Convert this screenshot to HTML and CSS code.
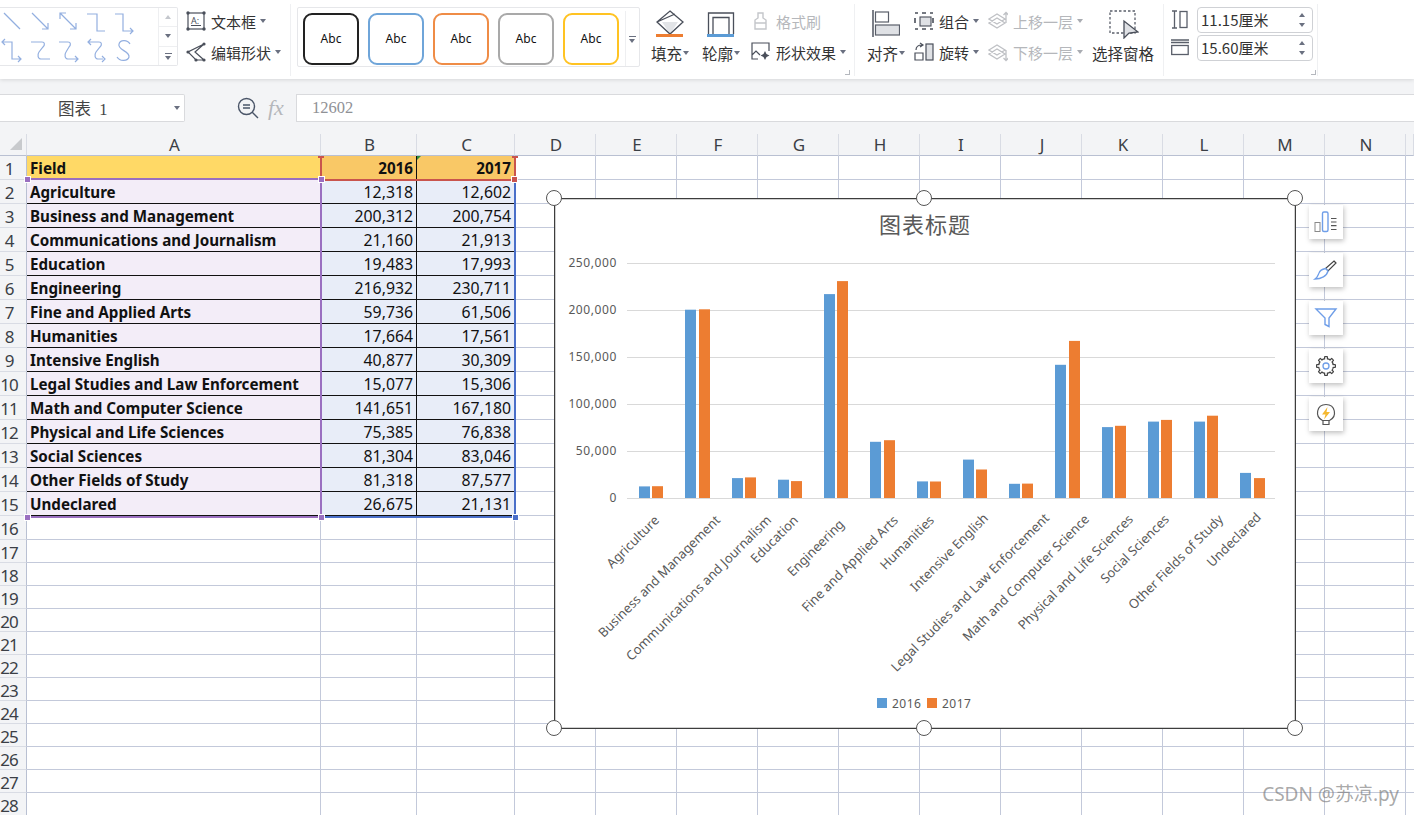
FILE: index.html
```html
<!DOCTYPE html>
<html lang="zh-CN">

<head>
    <meta charset="UTF-8">
    <meta name="viewport" content="width=device-width, initial-scale=1.0">
    <title>图表 1</title>
    <link rel="stylesheet" href="styles.css">
</head>

<body>
    <!-- Ribbon -->
    <div class="ribbon">
        <div class="shape-gallery">
            <svg class="connectors" width="156" height="57" viewBox="0 0 156 57">
                <g fill="none" stroke="#93afe0" stroke-width="1.2">
                    <path d="M4 5 20 21" />
                    <path d="M32 5 48 21M48 15v6h-6" />
                    <path d="M60 5 76 21M60 11V5h6M76 15v6h-6" />
                    <path d="M87 6h10v17h8" />
                    <path d="M115 6h8v17h10M130 20l3 3-3 3" />
                    <path d="M3 34h9v17h9M5 31l-3 3 3 3M18 48l3 3-3 3" />
                    <path d="M31 34h11c3 0 3 3 1 5l-4 5c-2 3-1 7 2 7h9" />
                    <path d="M59 34h9c3 0 3 3 1 5l-3 5c-2 3-1 7 2 7h10M75 48l3 3-3 3" />
                    <path d="M88 34h11c3 0 3 3 1 5l-4 5c-2 3-1 7 2 7h5M91 31l-3 3 3 3M102 48l3 3-3 3" />
                    <path d="M130 36c-3-5-10-4-11 0-2 6 11 7 10 13-1 4-9 5-12 0" />
                </g>
            </svg>
            <div class="gallery-scroll">
                <span class="scroll-btn"><i class="tri-up tri-light"></i></span>
                <span class="scroll-btn"><i class="tri-down"></i></span>
                <span class="scroll-btn"><i class="more-icon"></i></span>
            </div>
        </div>

        <div class="cmd-col textbox-col">
            <div class="cmd">
                <svg width="20" height="20" viewBox="0 0 20 20">
                    <rect x="2" y="2" width="16" height="16" fill="none" stroke="#4a4f5a" stroke-width="1.2" />
                    <g fill="#4a4f5a">
                        <circle cx="2" cy="2" r="1.7" />
                        <circle cx="18" cy="2" r="1.7" />
                        <circle cx="2" cy="18" r="1.7" />
                        <circle cx="18" cy="18" r="1.7" />
                        <rect x="5" y="14" width="10" height="1" />
                    </g>
                    <text x="5" y="12.5" class="icon-letter">A:</text>
                </svg>
                <span>文本框</span><i class="caret"></i>
            </div>
            <div class="cmd">
                <svg width="20" height="20" viewBox="0 0 20 20">
                    <path d="M18 2 2 10l8 8h8M18 2 9 10l9 8" fill="none" stroke="#4a4f5a" stroke-width="1.2" />
                    <g fill="#4a4f5a">
                        <circle cx="18" cy="2" r="1.6" />
                        <circle cx="2" cy="10" r="1.6" />
                        <circle cx="10" cy="18" r="1.6" />
                        <circle cx="18" cy="18" r="1.6" />
                    </g>
                </svg>
                <span>编辑形状</span><i class="caret"></i>
            </div>
        </div>

        <div class="sep sep-a"></div>

        <div class="style-gallery">
            <span class="abc abc-black">Abc</span>
            <span class="abc abc-blue">Abc</span>
            <span class="abc abc-orange">Abc</span>
            <span class="abc abc-grey">Abc</span>
            <span class="abc abc-yellow">Abc</span>
            <span class="style-more"><i class="more-icon"></i></span>
        </div>

        <div class="big-btn fill-btn">
            <svg width="28" height="28" viewBox="0 0 28 28">
                <path d="M14 12h-8l8 12 8-12z" fill="#e2e4e7" />
                <path d="M14 1 27 12 14 24 1 12zM1 12 19 4" fill="none" stroke="#4a4f5a" stroke-width="1.3" />
                <rect x="0" y="24" width="27" height="3" fill="#ed7d31" />
            </svg>
            <span class="big-label">填充<i class="caret"></i></span>
        </div>
        <div class="big-btn outline-btn">
            <svg width="28" height="28" viewBox="0 0 28 28">
                <path d="M1.500 24V3h25v21M6 24V7.500h16V24" fill="none" stroke="#4a4f5a" stroke-width="1.3" />
                <rect x="0" y="24" width="27" height="3" fill="#5b9bd5" />
            </svg>
            <span class="big-label">轮廓<i class="caret"></i></span>
        </div>

        <div class="cmd-col effects-col">
            <div class="cmd cmd-off">
                <svg width="20" height="20" viewBox="0 0 20 20">
                    <path d="M7 2h5v5l3 2v9H4V9l3-2zM4 12h11" fill="none" stroke="#c4c6ca" stroke-width="1.4" />
                </svg>
                <span>格式刷</span>
            </div>
            <div class="cmd">
                <svg width="20" height="20" viewBox="0 0 20 20">
                    <path d="M7 17H1V1h17v8M1 13l4-4 4 4" fill="none" stroke="#4a4f5a" stroke-width="1.2" />
                    <path d="M14 9l1.500 3 3 1.500-3 1.500-1.500 3-1.500-3-3-1.500 3-1.500z" fill="#4a4f5a" />
                </svg>
                <span>形状效果</span><i class="caret"></i>
            </div>
            <i class="corner-mark"></i>
        </div>

        <div class="sep sep-b"></div>

        <div class="big-btn align-btn">
            <svg width="28" height="28" viewBox="0 0 28 28">
                <path d="M1 0v27" stroke="#5a5f6a" stroke-width="1.600" />
                <rect x="3.500" y="2" width="13" height="10" fill="#fff" stroke="#5a5f6a" stroke-width="1.200" />
                <rect x="3.500" y="15" width="24" height="10" fill="#dfe1e5" stroke="#5a5f6a" stroke-width="1.200" />
            </svg>
            <span class="big-label">对齐<i class="caret"></i></span>
        </div>

        <div class="cmd-col group-col">
            <div class="cmd">
                <svg width="20" height="20" viewBox="0 0 20 20">
                    <path d="M1 2h3M8 2h4M16 2h3M1 7v5M19 7v5M1 18h3M8 18h4M16 18h3" stroke="#4a4f5a" stroke-width="1.600" fill="none" />
                    <rect x="6" y="6" width="11" height="9" fill="#dfe1e5" stroke="#4a4f5a" stroke-width="1.100" />
                </svg>
                <span>组合</span><i class="caret"></i>
            </div>
            <div class="cmd">
                <svg width="20" height="20" viewBox="0 0 20 20">
                    <rect x="12" y="2" width="7" height="16" fill="#dfe1e5" stroke="#4a4f5a" stroke-width="1.200" />
                    <path d="M1 18v-7h8v7zM2 8c0-3 2-5 6-5M6 1l3 2-3 2" fill="none" stroke="#4a4f5a" stroke-width="1.200" />
                </svg>
                <span>旋转</span><i class="caret"></i>
            </div>
        </div>

        <div class="cmd-col layer-col">
            <div class="cmd cmd-off">
                <svg width="20" height="20" viewBox="0 0 20 20">
                    <path d="M1 12l8-5 8 5-8 5zM1 8l8-5 8 5-8 5zM18 12V2M15.500 4 18 1.500 20.500 4" fill="#fff" stroke="#bfc1c5" stroke-width="1.300" />
                </svg>
                <span>上移一层</span><i class="caret caret-off"></i>
            </div>
            <div class="cmd cmd-off">
                <svg width="20" height="20" viewBox="0 0 20 20">
                    <path d="M1 12l8-5 8 5-8 5zM1 8l8-5 8 5-8 5zM18 8v10M15.500 16 18 18.500 20.500 16" fill="#fff" stroke="#bfc1c5" stroke-width="1.300" />
                </svg>
                <span>下移一层</span><i class="caret caret-off"></i>
            </div>
        </div>

        <div class="big-btn select-btn">
            <svg width="32" height="30" viewBox="0 0 32 30">
                <rect x="3" y="2" width="25" height="22" fill="none" stroke="#5a5f6a" stroke-width="1.300" stroke-dasharray="2.500 2" />
                <path d="M17 12v17l5-5 9-1z" fill="#dfe1e5" stroke="#4a4f5a" stroke-width="1.300" />
            </svg>
            <span class="big-label">选择窗格</span>
        </div>

        <div class="sep sep-c"></div>

        <div class="size-group">
            <div class="size-row">
                <svg width="18" height="20" viewBox="0 0 18 20">
                    <path d="M1 1h5M1 18h5M3.500 1v17" stroke="#5a5f6a" stroke-width="1.300" fill="none" />
                    <rect x="9" y="1.500" width="7" height="16" fill="none" stroke="#5a5f6a" stroke-width="1.300" />
                </svg>
                <div class="size-input">11.15厘米<span class="spin"><i class="tri-up"></i><i class="tri-down"></i></span></div>
            </div>
            <div class="size-row">
                <svg width="18" height="20" viewBox="0 0 18 20">
                    <path d="M0 2h18M0 4.500 18 4.500" stroke="#5a5f6a" stroke-width="1.300" fill="none" />
                    <rect x="0.700" y="7.500" width="16.500" height="9" fill="none" stroke="#5a5f6a" stroke-width="1.300" />
                </svg>
                <div class="size-input">15.60厘米<span class="spin"><i class="tri-up"></i><i class="tri-down"></i></span></div>
            </div>
            <i class="corner-mark"></i>
        </div>

        <div class="sep sep-d"></div>
    </div>

    <!-- Formula bar -->
    <div class="formula-bar">
        <div class="name-box">图表&nbsp; 1<i class="caret"></i></div>
        <svg class="zoom-icon" width="22" height="22" viewBox="0 0 22 22">
            <circle cx="9.500" cy="9.500" r="8" fill="none" stroke="#4a5568" stroke-width="1.400" />
            <path d="M6 8h7M6 11h7M15 15l6 6" stroke="#4a5568" stroke-width="1.400" fill="none" />
        </svg>
        <span class="fx">fx</span>
        <div class="formula-input">12602</div>
    </div>

    <!-- Sheet -->
    <div class="sheet">
        <div class="col-heads">
            <div class="corner"><i class="corner-tri"></i></div>
            <div class="col-head">A</div>
            <div class="col-head">B</div>
            <div class="col-head">C</div>
            <div class="col-head">D</div>
            <div class="col-head">E</div>
            <div class="col-head">F</div>
            <div class="col-head">G</div>
            <div class="col-head">H</div>
            <div class="col-head">I</div>
            <div class="col-head">J</div>
            <div class="col-head">K</div>
            <div class="col-head">L</div>
            <div class="col-head">M</div>
            <div class="col-head">N</div>
            <div class="col-head"></div>
        </div>

        <div class="row"><div class="rh">1</div><div class="c head-a">Field</div><div class="c head-n">2016</div><div class="c head-n">2017</div><div class="rest"></div></div>
        <div class="row"><div class="rh">2</div><div class="c field">Agriculture</div><div class="c num">12,318</div><div class="c num">12,602</div><div class="rest"></div></div>
        <div class="row"><div class="rh">3</div><div class="c field">Business and Management</div><div class="c num">200,312</div><div class="c num">200,754</div><div class="rest"></div></div>
        <div class="row"><div class="rh">4</div><div class="c field">Communications and Journalism</div><div class="c num">21,160</div><div class="c num">21,913</div><div class="rest"></div></div>
        <div class="row"><div class="rh">5</div><div class="c field">Education</div><div class="c num">19,483</div><div class="c num">17,993</div><div class="rest"></div></div>
        <div class="row"><div class="rh">6</div><div class="c field">Engineering</div><div class="c num">216,932</div><div class="c num">230,711</div><div class="rest"></div></div>
        <div class="row"><div class="rh">7</div><div class="c field">Fine and Applied Arts</div><div class="c num">59,736</div><div class="c num">61,506</div><div class="rest"></div></div>
        <div class="row"><div class="rh">8</div><div class="c field">Humanities</div><div class="c num">17,664</div><div class="c num">17,561</div><div class="rest"></div></div>
        <div class="row"><div class="rh">9</div><div class="c field">Intensive English</div><div class="c num">40,877</div><div class="c num">30,309</div><div class="rest"></div></div>
        <div class="row"><div class="rh">10</div><div class="c field">Legal Studies and Law Enforcement</div><div class="c num">15,077</div><div class="c num">15,306</div><div class="rest"></div></div>
        <div class="row"><div class="rh">11</div><div class="c field">Math and Computer Science</div><div class="c num">141,651</div><div class="c num">167,180</div><div class="rest"></div></div>
        <div class="row"><div class="rh">12</div><div class="c field">Physical and Life Sciences</div><div class="c num">75,385</div><div class="c num">76,838</div><div class="rest"></div></div>
        <div class="row"><div class="rh">13</div><div class="c field">Social Sciences</div><div class="c num">81,304</div><div class="c num">83,046</div><div class="rest"></div></div>
        <div class="row"><div class="rh">14</div><div class="c field">Other Fields of Study</div><div class="c num">81,318</div><div class="c num">87,577</div><div class="rest"></div></div>
        <div class="row"><div class="rh">15</div><div class="c field">Undeclared</div><div class="c num">26,675</div><div class="c num">21,131</div><div class="rest"></div></div>
        <div class="row row-16"><div class="rh">16</div><div class="c"></div><div class="c"></div><div class="c"></div><div class="rest"></div></div>
        <div class="row row-low"><div class="rh">17</div><div class="c"></div><div class="c"></div><div class="c"></div><div class="rest"></div></div>
        <div class="row row-low"><div class="rh">18</div><div class="c"></div><div class="c"></div><div class="c"></div><div class="rest"></div></div>
        <div class="row row-low"><div class="rh">19</div><div class="c"></div><div class="c"></div><div class="c"></div><div class="rest"></div></div>
        <div class="row row-low"><div class="rh">20</div><div class="c"></div><div class="c"></div><div class="c"></div><div class="rest"></div></div>
        <div class="row row-low"><div class="rh">21</div><div class="c"></div><div class="c"></div><div class="c"></div><div class="rest"></div></div>
        <div class="row row-low"><div class="rh">22</div><div class="c"></div><div class="c"></div><div class="c"></div><div class="rest"></div></div>
        <div class="row row-low"><div class="rh">23</div><div class="c"></div><div class="c"></div><div class="c"></div><div class="rest"></div></div>
        <div class="row row-low"><div class="rh">24</div><div class="c"></div><div class="c"></div><div class="c"></div><div class="rest"></div></div>
        <div class="row row-low"><div class="rh">25</div><div class="c"></div><div class="c"></div><div class="c"></div><div class="rest"></div></div>
        <div class="row row-low"><div class="rh">26</div><div class="c"></div><div class="c"></div><div class="c"></div><div class="rest"></div></div>
        <div class="row row-low"><div class="rh">27</div><div class="c"></div><div class="c"></div><div class="c"></div><div class="rest"></div></div>
        <div class="row row-low"><div class="rh">28</div><div class="c"></div><div class="c"></div><div class="c"></div><div class="rest"></div></div>

        <!-- Range highlight over the cells -->
        <i class="mark green-tick"></i>
        <i class="mark purple-top"></i>
        <i class="mark purple-side"></i>
        <i class="mark purple-bottom"></i>
        <i class="mark red-left"></i>
        <i class="mark red-right"></i>
        <i class="mark red-bottom"></i>
        <i class="mark blue-right"></i>
        <i class="mark blue-bottom"></i>
        <i class="mark tip tip-l"></i>
        <i class="mark tip tip-r"></i>
        <i class="mark dot dot-red dot-r3"></i>
        <i class="mark dot dot-purple dot-p1"></i>
        <i class="mark dot dot-purple dot-p2"></i>
        <i class="mark dot dot-purple dot-p3"></i>
        <i class="mark dot dot-purple dot-p4"></i>
        <i class="mark dot dot-blue dot-b1"></i>

        <!-- Chart object -->
        <div class="chart">
            <svg class="chart-svg" width="740" height="529" viewBox="555 199 740 529">
                <text x="925" y="233" class="chart-title">图表标题</text>

                <g stroke="#d9d9d9" stroke-width="1">
                    <path d="M627 263.500H1275M627 310.500H1275M627 357.500H1275M627 404.500H1275M627 451.500H1275" />
                    <path d="M627 498.500H1275" />
                </g>

                <g class="y-label">
                    <text x="617" y="267">250,000</text>
                    <text x="617" y="314">200,000</text>
                    <text x="617" y="361">150,000</text>
                    <text x="617" y="408">100,000</text>
                    <text x="617" y="455">50,000</text>
                    <text x="617" y="502">0</text>
                </g>

                <g fill="#5b9bd5">
                    <rect x="639" y="486.400" width="11" height="11.600" />
                    <rect x="685" y="309.700" width="11" height="188.300" />
                    <rect x="732" y="478.100" width="11" height="19.900" />
                    <rect x="778" y="479.700" width="11" height="18.300" />
                    <rect x="824" y="294.100" width="11" height="203.900" />
                    <rect x="870" y="441.800" width="11" height="56.200" />
                    <rect x="917" y="481.400" width="11" height="16.600" />
                    <rect x="963" y="459.600" width="11" height="38.400" />
                    <rect x="1009" y="483.800" width="11" height="14.200" />
                    <rect x="1055" y="364.800" width="11" height="133.200" />
                    <rect x="1102" y="427.100" width="11" height="70.900" />
                    <rect x="1148" y="421.600" width="11" height="76.400" />
                    <rect x="1194" y="421.600" width="11" height="76.400" />
                    <rect x="1240" y="472.900" width="11" height="25.100" />
                </g>
                <g fill="#ed7d31">
                    <rect x="652" y="486.200" width="11" height="11.800" />
                    <rect x="699" y="309.300" width="11" height="188.700" />
                    <rect x="745" y="477.400" width="11" height="20.600" />
                    <rect x="791" y="481.100" width="11" height="16.900" />
                    <rect x="837" y="281.100" width="11" height="216.900" />
                    <rect x="884" y="440.200" width="11" height="57.800" />
                    <rect x="930" y="481.500" width="11" height="16.500" />
                    <rect x="976" y="469.500" width="11" height="28.500" />
                    <rect x="1022" y="483.600" width="11" height="14.400" />
                    <rect x="1069" y="340.900" width="11" height="157.100" />
                    <rect x="1115" y="425.800" width="11" height="72.200" />
                    <rect x="1161" y="419.900" width="11" height="78.100" />
                    <rect x="1207" y="415.700" width="11" height="82.300" />
                    <rect x="1254" y="478.100" width="11" height="19.900" />
                </g>

                <g class="x-label">
                    <text transform="translate(660 521) rotate(-45)">Agriculture</text>
                    <text transform="translate(721 521) rotate(-45)">Business and Management</text>
                    <text transform="translate(772 521) rotate(-45)">Communications and Journalism</text>
                    <text transform="translate(799 521) rotate(-45)">Education</text>
                    <text transform="translate(845 525) rotate(-45)">Engineering</text>
                    <text transform="translate(899 521) rotate(-45)">Fine and Applied Arts</text>
                    <text transform="translate(935 521) rotate(-45)">Humanities</text>
                    <text transform="translate(989 519) rotate(-45)">Intensive English</text>
                    <text transform="translate(1050 519) rotate(-45)">Legal Studies and Law Enforcement</text>
                    <text transform="translate(1090 520) rotate(-45)">Math and Computer Science</text>
                    <text transform="translate(1134 520) rotate(-45)">Physical and Life Sciences</text>
                    <text transform="translate(1170 520) rotate(-45)">Social Sciences</text>
                    <text transform="translate(1224 520) rotate(-45)">Other Fields of Study</text>
                    <text transform="translate(1262 518) rotate(-45)">Undeclared</text>
                </g>

                <rect x="877" y="698" width="10" height="10" fill="#5b9bd5" />
                <text x="892" y="708" class="legend">2016</text>
                <rect x="927" y="698" width="10" height="10" fill="#ed7d31" />
                <text x="942" y="708" class="legend">2017</text>
            </svg>

            <i class="handle h-tl"></i>
            <i class="handle h-tc"></i>
            <i class="handle h-tr"></i>
            <i class="handle h-bl"></i>
            <i class="handle h-bc"></i>
            <i class="handle h-br"></i>
        </div>

        <!-- Chart side buttons -->
        <div class="chart-tools">
            <div class="tool">
                <svg width="34" height="34" viewBox="0 0 34 34">
                    <rect x="6" y="17.500" width="5" height="9" fill="#fff" stroke="#8a8a8a" />
                    <rect x="13.500" y="7" width="5.500" height="19.500" rx="1.500" fill="#fff" stroke="#6f9ee8" stroke-width="1.400" />
                    <path d="M22 13.500h5.500M22 17h5.500M22 20.700h5.500M22 24.500h5.500" stroke="#555" stroke-width="1.200" />
                </svg>
            </div>
            <div class="tool">
                <svg width="34" height="34" viewBox="0 0 34 34">
                    <path d="M25 8 27 10 19 18 16.500 15.500z" fill="#fff" stroke="#444" stroke-width="1.200" />
                    <path d="M16.500 15.500 19 18c-1 5-7 8-13 8 3-2 3-4 4-6 1-3 4-4 6.500-4.500z" fill="#fff" stroke="#6f9ee8" stroke-width="1.300" />
                </svg>
            </div>
            <div class="tool">
                <svg width="34" height="34" viewBox="0 0 34 34">
                    <path d="M7 8h20l-7 9v8.500l-4-2V17z" fill="#fff" stroke="#6f9ee8" stroke-width="1.400" />
                </svg>
            </div>
            <div class="tool">
                <svg width="34" height="34" viewBox="0 0 34 34">
                    <g fill="#444">
                        <rect x="7" y="15" width="20" height="4" rx="1" />
                        <rect x="7" y="15" width="20" height="4" rx="1" transform="rotate(45 17 17)" />
                        <rect x="7" y="15" width="20" height="4" rx="1" transform="rotate(90 17 17)" />
                        <rect x="7" y="15" width="20" height="4" rx="1" transform="rotate(135 17 17)" />
                        <circle cx="17" cy="17" r="8" />
                    </g>
                    <g fill="#fff">
                        <rect x="8.200" y="16.200" width="17.600" height="1.600" />
                        <rect x="8.200" y="16.200" width="17.600" height="1.600" transform="rotate(45 17 17)" />
                        <rect x="8.200" y="16.200" width="17.600" height="1.600" transform="rotate(90 17 17)" />
                        <rect x="8.200" y="16.200" width="17.600" height="1.600" transform="rotate(135 17 17)" />
                        <circle cx="17" cy="17" r="6.800" />
                    </g>
                    <circle cx="17" cy="17" r="3" fill="#fff" stroke="#6f9ee8" stroke-width="1.300" />
                </svg>
            </div>
            <div class="tool">
                <svg width="34" height="34" viewBox="0 0 34 34">
                    <path d="M13.500 23.500c-8-4-6-16 3.500-16s11.500 12 3.500 16z" fill="#fff" stroke="#555" stroke-width="1.200" />
                    <path d="M14 24v3.500h6V24" fill="none" stroke="#555" stroke-width="1.200" />
                    <path d="M18.500 10 13 17.500h3.500L15 22.500l6-7.500h-3.500z" fill="#f5b82e" />
                </svg>
            </div>
        </div>
    </div>

    <div class="watermark">CSDN @苏凉.py</div>
</body>

</html>
```

FILE: styles.css
```css
* {
    box-sizing: border-box;
}

html,
body {
    height: 100%;
}

body {
    margin: 0;
    height: 815px;
    overflow: hidden;
    position: relative;
    background-color: #f3f4f6;
    font-family: "Noto Sans", "Noto Sans CJK SC", sans-serif;
    color: #333;
}

i {
    display: block;
}

/* Ribbon */
.ribbon {
    display: flex;
    align-items: flex-start;
    height: 79px;
    background-color: white;
    box-shadow: 0 1px 4px rgba(0, 0, 0, 0.12);
    position: relative;
    font-family: "Noto Sans CJK SC", sans-serif;
    font-size: 15px;
}

.shape-gallery {
    display: flex;
    width: 178px;
    height: 59px;
    margin-top: 7px;
    border: 1px solid #e6e7ea;
    border-left: none;
    border-radius: 0 2px 2px 0;
}

.connectors {
    flex: none;
    margin-right: 2px;
}

.gallery-scroll {
    display: flex;
    flex-direction: column;
    flex: 1;
    border-left: 1px solid #eeeff1;
}

.scroll-btn {
    flex: 1;
    display: flex;
    align-items: center;
    justify-content: center;
    border-bottom: 1px solid #eeeff1;
}

.scroll-btn:last-child {
    border-bottom: none;
}

.tri-up {
    width: 0;
    height: 0;
    border-left: 3.5px solid transparent;
    border-right: 3.5px solid transparent;
    border-bottom: 4px solid #6a7080;
}

.tri-light {
    border-bottom-color: #c4c7cd;
}

.tri-down {
    width: 0;
    height: 0;
    border-left: 3.5px solid transparent;
    border-right: 3.5px solid transparent;
    border-top: 4px solid #6a7080;
}

.more-icon {
    width: 7px;
    height: 6px;
    border-top: 1px solid #6a7080;
    position: relative;
}

.more-icon::after {
    content: "";
    position: absolute;
    left: 0;
    top: 2px;
    border-left: 3.5px solid transparent;
    border-right: 3.5px solid transparent;
    border-top: 4px solid #6a7080;
}

.cmd-col {
    display: flex;
    flex-direction: column;
    gap: 7px;
    padding-top: 9px;
    position: relative;
}

.cmd {
    display: flex;
    align-items: center;
    height: 24px;
    gap: 5px;
    white-space: nowrap;
}

.cmd svg {
    flex: none;
}

.cmd-off {
    color: #b5b7bb;
}

.caret {
    width: 0;
    height: 0;
    margin-left: -1px;
    border-left: 3.5px solid transparent;
    border-right: 3.5px solid transparent;
    border-top: 4px solid #6a7080;
}

.caret-off {
    border-top-color: #a9acb2;
}

.icon-letter {
    font-family: "Noto Sans", sans-serif;
    font-size: 9px;
    fill: #4a4f5a;
}

.textbox-col {
    width: 104px;
    margin-left: 8px;
}

.sep {
    flex: none;
    width: 1px;
    height: 72px;
    margin-top: 4px;
    background-color: #eff0f2;
}

.style-gallery {
    display: flex;
    align-items: center;
    gap: 9px;
    width: 343px;
    height: 60px;
    margin-left: 6px;
    margin-top: 7px;
    padding-left: 5px;
    padding-top: 3px;
    border: 1px solid #e6e7ea;
    border-radius: 2px;
}

.abc {
    display: flex;
    align-items: center;
    justify-content: center;
    width: 56px;
    height: 52px;
    border: 2px solid #222;
    border-radius: 9px;
    font-family: "Noto Sans", sans-serif;
    font-size: 12px;
    color: #111;
}

.abc-blue {
    border-color: #6fa5d9;
}

.abc-orange {
    border-color: #ef8c46;
}

.abc-grey {
    border-color: #a9a9a9;
}

.abc-yellow {
    border-color: #ffc322;
}

.style-more {
    display: flex;
    align-items: center;
    justify-content: center;
    align-self: stretch;
    flex: 1;
    margin-left: -3px;
    border-left: 1px solid #eeeff1;
}

.big-btn {
    display: flex;
    flex-direction: column;
    align-items: center;
    flex: none;
    width: 40px;
    padding-top: 10px;
}

.big-label {
    display: flex;
    align-items: center;
    gap: 2px;
    margin-top: 4px;
    font-size: 15.5px;
    white-space: nowrap;
}

.fill-btn {
    margin-left: 10px;
}

.outline-btn {
    margin-left: 11px;
}

.effects-col {
    width: 96px;
    height: 79px;
    margin-left: 10px;
}

.corner-mark {
    position: absolute;
    right: -3px;
    bottom: 4px;
    width: 5px;
    height: 5px;
    border-right: 1px solid #b5b8be;
    border-bottom: 1px solid #b5b8be;
}

.sep-b {
    margin-left: 7px;
}

.align-btn {
    margin-left: 11px;
}

.group-col {
    width: 70px;
    margin-left: 8px;
}

.layer-col {
    width: 98px;
    margin-left: 4px;
}

.select-btn {
    width: 62px;
    margin-left: 6px;
    padding-top: 9px;
}

.select-btn .big-label {
    margin-top: 3px;
}

.sep-c {
    margin-left: 9px;
}

.size-group {
    display: flex;
    flex-direction: column;
    gap: 2px;
    width: 142px;
    height: 79px;
    margin-left: 7px;
    padding-top: 7px;
    position: relative;
}

.size-row {
    display: flex;
    align-items: center;
    gap: 8px;
}

.size-input {
    display: flex;
    align-items: center;
    justify-content: space-between;
    width: 116px;
    height: 26px;
    padding: 0 7px 2px 3px;
    border: 1px solid #cfd1d5;
    border-radius: 4px;
    font-size: 15px;
    white-space: nowrap;
}

.spin {
    display: flex;
    flex-direction: column;
    gap: 6px;
    padding-top: 2px;
}

.sep-d {
    margin-left: 4px;
}

/* Formula bar */
.formula-bar {
    display: flex;
    align-items: center;
    height: 55px;
    padding-top: 3px;
}

.name-box {
    display: flex;
    align-items: center;
    justify-content: space-between;
    width: 185px;
    height: 28px;
    padding: 0 4px 0 58px;
    background-color: white;
    border: 1px solid #d9dadd;
    border-left: none;
    border-radius: 0 2px 2px 0;
    font-family: "Liberation Serif", "Noto Sans CJK SC", serif;
    font-size: 16.5px;
    color: #444;
}

.zoom-icon {
    margin-left: 52px;
}

.fx {
    width: 28px;
    margin-left: 9px;
    font-family: "Liberation Serif", serif;
    font-style: italic;
    font-size: 22px;
    color: #b5b7bb;
}

.formula-input {
    flex: 1;
    height: 28px;
    padding-left: 15px;
    line-height: 26px;
    background-color: white;
    border: 1px solid #d9dadd;
    border-right: none;
    font-family: "Liberation Serif", serif;
    font-size: 16.5px;
    color: #8f9196;
}

/* Sheet */
.sheet {
    position: relative;
    background-color: white;
}

.col-heads {
    display: grid;
    grid-template-columns: 27px 294px 96px 98px repeat(11, 81px) 1fr;
    grid-template-rows: 22px;
    height: 22px;
    background-color: #f3f4f6;
}

.corner {
    position: relative;
    border-right: 1px solid #d9dce4;
    border-bottom: 1px solid #b9c0d2;
}

.corner-tri {
    position: absolute;
    left: 10px;
    top: 4px;
    width: 0;
    height: 0;
    border-left: 12px solid transparent;
    border-bottom: 12px solid #c8cacd;
}

.col-head {
    display: flex;
    align-items: center;
    justify-content: center;
    padding-left: 2px;
    border-right: 1px solid #d9dce4;
    border-bottom: 1px solid #b9c0d2;
    font-size: 17px;
    line-height: 1;
    color: #3b3f46;
}

.row {
    display: grid;
    grid-template-columns: 27px 294px 96px 98px 1fr;
    grid-template-rows: 24px;
    height: 24px;
}

.row-low {
    grid-template-rows: 23px;
    height: 23px;
}

.rh {
    display: flex;
    align-items: center;
    justify-content: center;
    padding: 2px 8px 0 0;
    background-color: #f3f4f6;
    border-right: 1px solid #b9c0d2;
    border-bottom: 1px solid #d9dce4;
    font-size: 17px;
    line-height: 1;
    color: #3b3f46;
    letter-spacing: -1px;
}

.c {
    display: flex;
    align-items: center;
    padding: 2px 3px 0;
    border-right: 1px solid #c3c9da;
    border-bottom: 1px solid #c3c9da;
    font-size: 15px;
    line-height: 1;
    color: #111;
    white-space: nowrap;
}

.rest {
    border-bottom: 1px solid #c3c9da;
    background-image: repeating-linear-gradient(to right, transparent 0, transparent 80px, #c3c9da 80px, #c3c9da 81px);
}

.field,
.num {
    border-bottom-color: #111;
}

.field {
    background-color: #f3edf8;
    font-size: 15.2px;
    font-weight: bold;
}

.num {
    justify-content: flex-end;
    background-color: #e8edf8;
    border-right-color: #111;
    font-size: 15.8px;
}

.head-a,
.head-n {
    font-size: 15.2px;
    font-weight: bold;
}

.head-a {
    background-color: #ffd966;
}

.head-n {
    justify-content: flex-end;
    background-color: #f9c866;
    border-right-color: #111;
}

/* Range highlight, coordinates from the top of the sheet */
.mark {
    position: absolute;
}

.green-tick {
    left: 417px;
    top: 22px;
    border-top: 4px solid #2e8b3a;
    border-right: 4px solid transparent;
}

.purple-top {
    left: 27px;
    top: 44px;
    width: 293px;
    height: 2px;
    background-color: #9a6fc0;
}

.purple-side {
    left: 320px;
    top: 46px;
    width: 2px;
    height: 337px;
    background-color: #9a6fc0;
}

.purple-bottom {
    left: 27px;
    top: 382px;
    width: 293px;
    height: 2px;
    background-color: #9a6fc0;
}

.red-left {
    left: 320px;
    top: 22px;
    width: 2px;
    height: 24px;
    background-color: #c9544d;
}

.red-right {
    left: 514px;
    top: 22px;
    width: 2px;
    height: 24px;
    background-color: #c9544d;
}

.red-bottom {
    left: 322px;
    top: 45px;
    width: 192px;
    height: 2px;
    background-color: #c9544d;
}

.blue-right {
    left: 514px;
    top: 46px;
    width: 2px;
    height: 337px;
    background-color: #4a6fc9;
}

.blue-bottom {
    left: 322px;
    top: 382px;
    width: 193px;
    height: 2px;
    background-color: #4a6fc9;
}

.tip {
    top: 22px;
    width: 6px;
    height: 2px;
    background-color: #c9544d;
}

.tip-l {
    left: 318px;
}

.tip-r {
    left: 512px;
}

.dot {
    width: 5px;
    height: 5px;
    border: 1px solid white;
    box-sizing: content-box;
}

.dot-red {
    background-color: #c9544d;
}

.dot-purple {
    background-color: #9a6fc0;
}

.dot-blue {
    background-color: #4a6fc9;
}

.dot-r3 {
    left: 511px;
    top: 42px;
}

.dot-p1 {
    left: 24px;
    top: 42px;
}

.dot-p2 {
    left: 318px;
    top: 42px;
}

.dot-p3 {
    left: 24px;
    top: 380px;
}

.dot-p4 {
    left: 318px;
    top: 380px;
}

.dot-b1 {
    left: 512px;
    top: 380px;
}

/* Chart */
.chart {
    position: absolute;
    left: 554px;
    top: 64px;
    width: 742px;
    height: 531px;
    background-color: white;
    border: 1px solid #3d3d3d;
    box-shadow: inset 0 0 0 1px #d0d0d0;
}

.chart-svg {
    display: block;
    margin: 0;
    font-family: "Noto Sans", sans-serif;
}

.chart-title {
    font-family: "Noto Sans CJK SC", sans-serif;
    font-size: 22px;
    letter-spacing: 1px;
    text-anchor: middle;
    fill: #595959;
}

.y-label text {
    font-size: 12px;
    letter-spacing: 0.6px;
    text-anchor: end;
    fill: #595959;
}

.x-label text {
    font-size: 13px;
    text-anchor: end;
    fill: #595959;
}

.legend {
    font-size: 12px;
    letter-spacing: 0.5px;
    fill: #595959;
}

.handle {
    position: absolute;
    width: 16px;
    height: 16px;
    background-color: white;
    border: 1.5px solid #555;
    border-radius: 50%;
}

.h-tl {
    left: -9px;
    top: -9px;
}

.h-tc {
    left: 361px;
    top: -9px;
}

.h-tr {
    left: 732px;
    top: -9px;
}

.h-bl {
    left: -9px;
    top: 521px;
}

.h-bc {
    left: 361px;
    top: 521px;
}

.h-br {
    left: 732px;
    top: 521px;
}

.chart-tools {
    position: absolute;
    left: 1309px;
    top: 71px;
    display: flex;
    flex-direction: column;
    gap: 14px;
}

.tool {
    width: 34px;
    height: 34px;
    background-color: white;
    box-shadow: 1px 2px 5px rgba(0, 0, 0, 0.25);
}

.tool svg {
    display: block;
}

.watermark {
    position: absolute;
    right: 15px;
    bottom: 8px;
    font-family: "Noto Sans", "Noto Sans CJK SC", sans-serif;
    font-size: 19px;
    color: rgba(120, 120, 120, 0.65);
}
```
